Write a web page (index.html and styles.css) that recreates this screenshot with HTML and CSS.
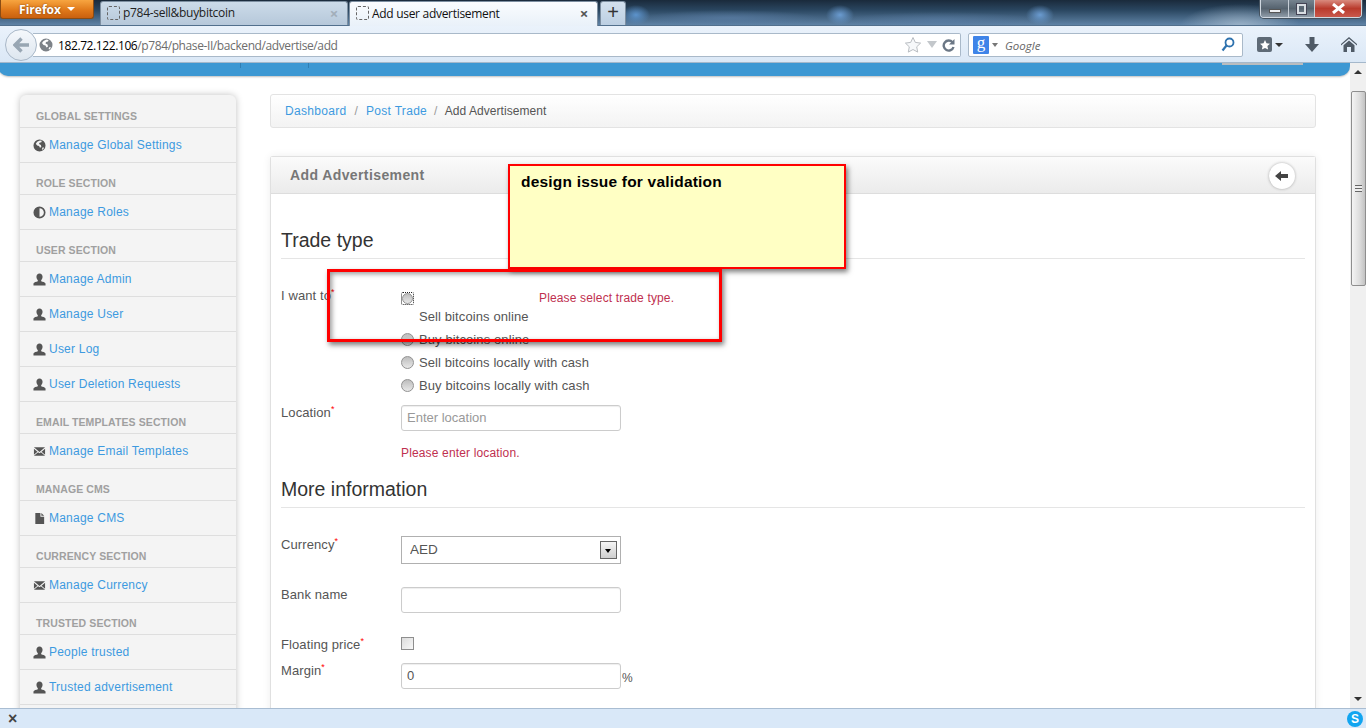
FILE: index.html
```html
<!DOCTYPE html>
<html>
<head>
    <title>Add user advertisement</title>
    <link rel="stylesheet" href="styles.css">
</head>
<body>
    <svg class="defs" width="0" height="0">
        <symbol id="i-user" viewBox="0 0 14 14"><path d="M7 0.5c2 0 3.3 1.5 3.3 3.6 0 1.600-.7 3-1.500 3.700v1.200c1.600.5 4.200 1.200 4.700 2.200v2.300H.5v-2.300c.5-1 3.100-1.700 4.700-2.200V7.800C4.400 7.100 3.700 5.700 3.700 4.100 3.700 2 5 .5 7 .5z"/></symbol>
        <symbol id="i-mail" viewBox="0 0 14 14"><path d="M1 2.500h12L7 7.500zM1 4l3.800 3.200L1 10.500zM13 4v6.500L9.200 7.200zM5.500 7.800L7 9l1.500-1.200 4.500 3.700H1z"/></symbol>
        <symbol id="i-file" viewBox="0 0 14 14"><path d="M2.500 1h5.500v4h4v8h-9.500zM9 1l3 3H9z"/></symbol>
        <symbol id="i-globe" viewBox="0 0 14 14"><path fill-rule="evenodd" d="M7 .5a6.500 6.500 0 1 1 0 13 6.500 6.500 0 0 1 0-13zM4.500 3L3 5l1.500 2 2 .5 1 2 1.500-1-.5-2-2-1 .5-1.500 2-.5.5-1.500-2-.5zM10.500 9l-1 2 1 .5 1.500-2z"/></symbol>
        <symbol id="i-contrast" viewBox="0 0 14 14"><path fill-rule="evenodd" d="M7 .5a6.500 6.500 0 1 1 0 13 6.500 6.500 0 0 1 0-13zM7 2.300v9.400a4.700 4.700 0 0 0 0-9.400z"/></symbol>
    </svg>

    <div class="window">
        <div class="titlebar">
            <div class="firefox-btn">Firefox <span class="caret"></span></div>
            <div class="tab">
                <span class="tab-fav"></span>
                <span class="tab-title">p784-sell&amp;buybitcoin</span>
                <span class="tab-close muted">&#215;</span>
            </div>
            <div class="tab tab-active">
                <span class="tab-fav"></span>
                <span class="tab-title">Add user advertisement</span>
                <span class="tab-close">&#215;</span>
            </div>
            <div class="tab-new">+</div>
            <div class="win-controls">
                <span class="win-btn win-min"><i></i></span>
                <span class="win-btn win-max"><i></i></span>
                <span class="win-btn win-close">
                    <svg width="13" height="11" viewBox="0 0 13 11"><path d="M1 1l11 9M12 1L1 10" stroke="#fff" stroke-width="3"/></svg>
                </span>
            </div>
        </div>

        <div class="navbar">
            <div class="back-btn">
                <svg width="17" height="16" viewBox="0 0 17 16"><path d="M8.500 1.500L2 8l6.500 6.500M2.500 8H16" fill="none" stroke="#98a6b3" stroke-width="3.400"/></svg>
            </div>
            <div class="urlbar">
                <svg class="url-globe" width="14" height="14"><use href="#i-globe" fill="#7d8288"/></svg>
                <span class="url-text"><b>182.72.122.106</b>/p784/phase-II/backend/advertise/add</span>
                <svg class="url-star" width="18" height="18" viewBox="0 0 18 18"><path d="M9 1.500l2.300 4.900 5.300.7-3.900 3.700 1 5.300L9 13.500l-4.700 2.600 1-5.300L1.400 7.100l5.300-.7z" fill="#f6f8fa" stroke="#b9bdc2"/></svg>
                <span class="url-drop"></span>
                <svg class="url-reload" width="13" height="14" viewBox="0 0 13 14"><path d="M10.500 4.300A5 5 0 1 0 11.500 9" fill="none" stroke="#6b7785" stroke-width="2.400"/><path d="M12.500 1v5.500H7z" fill="#6b7785"/></svg>
            </div>
            <div class="searchbar">
                <span class="g-badge">g</span>
                <span class="search-drop"></span>
                <span class="search-text">Google</span>
                <svg width="14" height="15" viewBox="0 0 14 15"><circle cx="8.500" cy="5.500" r="4" fill="none" stroke="#2e72ae" stroke-width="1.800"/><path d="M5.500 8.500L1.500 13.500" stroke="#2e72ae" stroke-width="2.200"/></svg>
            </div>
            <div class="nav-tools">
                <span class="bm-btn">
                    <svg width="14" height="14" viewBox="0 0 14 14"><path d="M7 2l1.500 3.300 3.500.4-2.600 2.400.7 3.500L7 9.900l-3.100 1.700.7-3.500L2 5.700l3.500-.4z" fill="#fff"/></svg>
                </span>
                <span class="bm-caret"></span>
                <svg class="dl-icon" width="14" height="15" viewBox="0 0 14 15"><path d="M4.500 0h5v7H14l-7 8-7-8h4.500z" fill="#4f5a66"/></svg>
                <svg class="home-icon" width="16" height="15" viewBox="0 0 16 15"><path d="M8 0l8 7v1.500L8 1.800 0 8.500V7z" fill="#4f5a66"/><path d="M8 3.500l5.500 4.700V15H10v-5H6v5H2.500V8.200z" fill="#4f5a66"/></svg>
            </div>
        </div>

        <div class="viewport">
            <div class="page">
                <div class="site-header"><i class="hdr-sep"></i><i class="hdr-sep"></i><i class="hdr-btn"></i></div>
                <div class="columns">
                    <aside class="sidebar">
                        <div class="side-head">Global Settings</div>
                        <a class="side-item"><svg width="13" height="13"><use href="#i-globe"/></svg>Manage Global Settings</a>
                        <div class="side-head">Role Section</div>
                        <a class="side-item"><svg width="13" height="13"><use href="#i-contrast"/></svg>Manage Roles</a>
                        <div class="side-head">User Section</div>
                        <a class="side-item"><svg width="13" height="13"><use href="#i-user"/></svg>Manage Admin</a>
                        <a class="side-item"><svg width="13" height="13"><use href="#i-user"/></svg>Manage User</a>
                        <a class="side-item"><svg width="13" height="13"><use href="#i-user"/></svg>User Log</a>
                        <a class="side-item"><svg width="13" height="13"><use href="#i-user"/></svg>User Deletion Requests</a>
                        <div class="side-head">Email Templates Section</div>
                        <a class="side-item"><svg width="13" height="13"><use href="#i-mail"/></svg>Manage Email Templates</a>
                        <div class="side-head">Manage CMS</div>
                        <a class="side-item"><svg width="13" height="13"><use href="#i-file"/></svg>Manage CMS</a>
                        <div class="side-head">Currency Section</div>
                        <a class="side-item"><svg width="13" height="13"><use href="#i-mail"/></svg>Manage Currency</a>
                        <div class="side-head">Trusted Section</div>
                        <a class="side-item"><svg width="13" height="13"><use href="#i-user"/></svg>People trusted</a>
                        <a class="side-item"><svg width="13" height="13"><use href="#i-user"/></svg>Trusted advertisement</a>
                        <div class="side-more"></div>
                    </aside>

                    <main class="main">
                        <div class="breadcrumb">
                            <a>Dashboard</a><span class="crumb-sep">/</span><a>Post Trade</a><span class="crumb-sep">/</span><span class="crumb-current">Add Advertisement</span>
                        </div>
                        <section class="panel">
                            <div class="panel-head">
                                <span class="panel-title">Add Advertisement</span>
                                <span class="round-btn">
                                    <svg width="14" height="10" viewBox="0 0 14 10"><path d="M6 0v3h7v4H6v3L0 5z" fill="#444"/></svg>
                                </span>
                            </div>
                            <div class="panel-body">
                                <h3 class="legend legend-first">Trade type</h3>
                                <div class="form-row row-trade">
                                    <label class="form-label">I want to<sup class="req">*</sup></label>
                                    <div class="radio-list">
                                        <div class="radio-first"><span class="focus-ring"><input type="radio" class="radio" name="trade"></span><span class="error error-trade">Please select trade type.</span></div>
                                        <div class="radio-text-only">Sell bitcoins online</div>
                                        <div class="radio-row"><input type="radio" class="radio" name="trade">Buy bitcoins online</div>
                                        <div class="radio-row"><input type="radio" class="radio" name="trade">Sell bitcoins locally with cash</div>
                                        <div class="radio-row"><input type="radio" class="radio" name="trade">Buy bitcoins locally with cash</div>
                                    </div>
                                </div>
                                <div class="form-row row-location">
                                    <label class="form-label">Location<sup class="req">*</sup></label>
                                    <div>
                                        <input type="text" class="text-input" placeholder="Enter location">
                                        <div class="error error-location">Please enter location.</div>
                                    </div>
                                </div>
                                <h3 class="legend legend-more">More information</h3>
                                <div class="form-row row-currency">
                                    <label class="form-label">Currency<sup class="req">*</sup></label>
                                    <div class="select-wrap">
                                        <select class="select-input"><option>AED</option></select>
                                        <span class="select-arrow"></span>
                                    </div>
                                </div>
                                <div class="form-row row-bank">
                                    <label class="form-label">Bank name</label>
                                    <input type="text" class="text-input">
                                </div>
                                <div class="form-row row-floating">
                                    <label class="form-label">Floating price<sup class="req">*</sup></label>
                                    <input type="checkbox" class="check">
                                </div>
                                <div class="form-row row-margin">
                                    <label class="form-label">Margin<sup class="req">*</sup></label>
                                    <input type="text" class="text-input" value="0"><span class="unit">%</span>
                                </div>
                            </div>
                        </section>
                    </main>
                </div>
            </div>
            <div class="scrollbar">
                <span class="sb-up"></span>
                <div class="sb-thumb"><i></i></div>
                <span class="sb-down"></span>
            </div>

            <div class="note">design issue for validation</div>
            <div class="redbox"></div>
        </div>

        <div class="statusbar">
            <span class="status-x">&#215;</span>
            <span class="skype">S</span>
        </div>
    </div>
</body>
</html>
```

FILE: styles.css
```css
* {
    box-sizing: border-box;
}

html, body {
    margin: 0;
    height: 100%;
    overflow: hidden;
}

body {
    font-family: "Liberation Sans", Arial, sans-serif;
    font-size: 12px;
    letter-spacing: 0.22px;
    color: #555;
}

.defs {
    position: absolute;
}

.window {
    display: flex;
    flex-direction: column;
    height: 728px;
}

/* browser chrome */
.titlebar {
    height: 26px;
    display: flex;
    align-items: flex-end;
    padding-left: 100px;
    position: relative;
    letter-spacing: 0;
    background:
        radial-gradient(ellipse 14px 10px at 840px 15px, #6a9bd0 0, rgba(106,155,208,0) 100%),
        radial-gradient(ellipse 14px 10px at 1040px 15px, #6a9bd0 0, rgba(106,155,208,0) 100%),
        radial-gradient(ellipse 14px 10px at 636px 15px, #5c93cc 0, rgba(92,147,204,0) 100%),
        radial-gradient(ellipse 90px 8px at 730px 18px, rgba(90,125,165,.7) 0, rgba(90,125,165,0) 100%),
        radial-gradient(ellipse 100px 8px at 940px 20px, rgba(90,125,165,.6) 0, rgba(90,125,165,0) 100%),
        radial-gradient(ellipse 60px 22px at 1240px 26px, rgba(170,190,208,.8) 0, rgba(170,190,208,0) 100%),
        linear-gradient(#1a2a3b 0, #2a4660 40%, #5f83a6 100%);
    border-bottom: 1px solid #52708d;
}

.firefox-btn {
    position: absolute;
    left: 0;
    top: 0;
    width: 94px;
    height: 19px;
    background: linear-gradient(#f7a540, #e0791a 55%, #c9600f);
    border: 1px solid #8a4c14;
    border-top: 0;
    border-radius: 0 0 3px 3px;
    color: #fff;
    font-size: 12px;
    font-weight: bold;
    font-family: "Open Sans", sans-serif;
    display: flex;
    align-items: center;
    justify-content: center;
    gap: 6px;
    text-shadow: 0 0 2px #7a3c08;
}

.caret {
    border: 4px solid transparent;
    border-top: 4px solid #fff;
    margin-top: 4px;
}

.tab {
    width: 248px;
    height: 24px;
    background: linear-gradient(#ccdbe9, #b6c8da);
    border: 1px solid #7d8fa1;
    border-bottom: 0;
    border-radius: 3px 3px 0 0;
    display: flex;
    align-items: center;
    padding: 0 9px 2px 6px;
    color: #222;
    font-family: "Open Sans", sans-serif;
    font-size: 12px;
    letter-spacing: -0.3px;
}

.tab-active {
    width: 249px;
    height: 25px;
    margin-bottom: -1px;
    background: linear-gradient(#fafcfe, #e9f1f9);
    margin-left: 1px;
    color: #111;
}

.tab-fav {
    width: 13px;
    height: 14px;
    border: 1px dashed #666;
    border-radius: 2px;
    margin-right: 3px;
    flex-shrink: 0;
}

.tab-title {
    flex: 1;
}

.tab-close {
    font-size: 15px;
    font-weight: bold;
    color: #555;
}

.tab-close.muted {
    color: #a2aeba;
}

.tab-new {
    width: 26px;
    height: 24px;
    margin-left: 2px;
    background: linear-gradient(#d2e0ee, #bccfe2);
    border: 1px solid #7d8fa1;
    border-bottom: 0;
    border-radius: 3px 3px 0 0;
    color: #333;
    font-size: 20px;
    line-height: 20px;
    text-align: center;
}

.win-controls {
    position: absolute;
    left: 1260px;
    top: 0;
    width: 102px;
    height: 18px;
    display: flex;
    border: 1px solid #d0d8e0;
    border-top: 0;
    border-radius: 0 0 4px 4px;
    box-shadow: 0 0 0 1px #44525f;
    overflow: hidden;
}

.win-btn {
    display: flex;
    align-items: center;
    justify-content: center;
    background: linear-gradient(#76838f, #56636f 50%, #8f9ca8);
    border-right: 1px solid #c6ced6;
}

.win-min { width: 28px; }
.win-max { width: 26px; }

.win-min i {
    width: 12px;
    height: 4px;
    background: #eef1f4;
    border: 1px solid #555;
    margin-top: 5px;
}

.win-max i {
    width: 9px;
    height: 10px;
    border: 2px solid #d8dde2;
    outline: 1px solid #445;
    box-shadow: 2px -2px 0 -1px #b8c0c8;
}

.win-close {
    flex: 1;
    border: 0;
    background: linear-gradient(#d98a7e, #b93a2c 50%, #c9594c);
}

.navbar {
    height: 37px;
    background: linear-gradient(#eaf2fb, #dbe8f6);
    border-bottom: 1px solid #a5b8cb;
    display: flex;
    align-items: center;
    padding: 1px 0 0 33px;
    position: relative;
    letter-spacing: 0;
}

.back-btn {
    position: absolute;
    left: 5px;
    top: 3px;
    width: 32px;
    height: 32px;
    border-radius: 50%;
    background: linear-gradient(#f5f8fc, #dde6ef);
    border: 1px solid #a9b8c8;
    display: flex;
    align-items: center;
    justify-content: center;
    z-index: 1;
}

.urlbar {
    width: 928px;
    height: 24px;
    background: #fff;
    border: 1px solid #a9b9c9;
    border-left: 0;
    border-radius: 0 2px 2px 0;
    display: flex;
    align-items: center;
    padding: 0 5px 0 6px;
    font-family: "Open Sans", sans-serif;
    font-size: 12px;
    letter-spacing: -0.4px;
    color: #6d6d6d;
}

.url-text {
    flex: 1;
    margin-left: 5px;
    padding-top: 1px;
}

.url-text b {
    font-weight: normal;
    color: #000;
}

.url-drop {
    border: 5px solid transparent;
    border-top: 7px solid #c3c7cb;
    margin: 5px 5px 0 5px;
}

.searchbar {
    width: 275px;
    height: 24px;
    margin-left: 7px;
    background: #fff;
    border: 1px solid #a9b9c9;
    border-radius: 2px;
    display: flex;
    align-items: center;
    padding: 0 7px 0 4px;
}

.g-badge {
    width: 16px;
    height: 18px;
    background: #3f84e8;
    color: #fff;
    font-family: "Liberation Serif", serif;
    font-size: 17px;
    line-height: 14px;
    text-align: center;
    border-radius: 1px;
}

.search-drop {
    border: 3px solid transparent;
    border-top: 4px solid #777;
    margin: 4px 0 0 3px;
}

.search-text {
    flex: 1;
    margin-left: 7px;
    padding-top: 1px;
    font-family: "Open Sans", sans-serif;
    font-style: italic;
    font-size: 11.500px;
    color: #666;
}

.nav-tools {
    display: flex;
    align-items: center;
    margin-left: 14px;
}

.bm-btn {
    width: 15px;
    height: 15px;
    background: #5e6a76;
    border-radius: 2px;
    display: flex;
    align-items: center;
    justify-content: center;
}

.bm-caret {
    border: 4px solid transparent;
    border-top: 4px solid #333;
    margin: 4px 0 0 3px;
}

.dl-icon { margin-left: 22px; }
.home-icon { margin-left: 22px; }

/* page */
.viewport {
    flex: 1;
    display: flex;
    min-height: 0;
    position: relative;
}

.page {
    flex: 1;
    overflow: hidden;
    background: #fff;
}

.site-header {
    height: 13px;
    background: #3d98d3;
    border-radius: 0 0 10px 10px;
    box-shadow: 0 1px 2px rgba(0,0,0,.25);
    display: flex;
    padding-left: 242px;
    margin-left: -2px;
}

.hdr-sep {
    width: 1px;
    height: 5px;
    background: #2f7eb4;
    margin-right: 67px;
}

.hdr-btn {
    position: absolute;
    left: 1222px;
    top: 0;
    width: 81px;
    height: 2px;
    background: #b9bcbf;
}

.columns {
    display: flex;
    align-items: flex-start;
    padding: 18px 34px 0 20px;
}

.sidebar {
    width: 216px;
    flex-shrink: 0;
    background: #f4f4f4;
    border-radius: 6px 6px 0 0;
    box-shadow: 0 0 7px rgba(0,0,0,.25);
    margin-top: 1px;
    padding-top: 1px;
}

.side-head {
    height: 32px;
    padding: 14px 0 0 16px;
    font-size: 10.500px;
    line-height: 13px;
    font-weight: bold;
    text-transform: uppercase;
    color: #a0a0a0;
    border-bottom: 1px solid #dedede;
    letter-spacing: 0.1px;
}

.side-item {
    height: 35px;
    display: flex;
    align-items: center;
    gap: 3px;
    padding-left: 13px;
    color: #3d9ae0;
    border-bottom: 1px solid #dedede;
}

.side-item svg {
    fill: #555;
    flex-shrink: 0;
}

.side-more {
    height: 40px;
}

.main {
    flex: 1;
    margin-left: 34px;
    min-width: 0;
}

.breadcrumb {
    height: 34px;
    border: 1px solid #e3e3e3;
    border-radius: 3px;
    background: linear-gradient(#fff, #f3f3f3);
    padding: 0 14px;
    display: flex;
    align-items: center;
    color: #555;
    letter-spacing: 0.3px;
}

.breadcrumb a {
    color: #3d9ae0;
}

.crumb-sep {
    margin: 0 7px;
    color: #999;
}

.crumb-sep:first-of-type {
    margin: 0 8px;
}

.crumb-current {
    letter-spacing: 0.05px;
}

.panel {
    margin-top: 28px;
    border: 1px solid #e0e0e0;
    border-bottom: 0;
    border-radius: 3px 3px 0 0;
    box-shadow: 0 0 8px rgba(0,0,0,.07);
    background: #fff;
}

.panel-head {
    height: 37px;
    background: linear-gradient(#fbfbfb, #ebebeb);
    border-bottom: 1px solid #ddd;
    display: flex;
    align-items: center;
    justify-content: space-between;
    padding: 0 20px 0 19px;
}

.panel-title {
    font-size: 14px;
    font-weight: bold;
    color: #777;
    letter-spacing: 0.4px;
}

.round-btn {
    width: 26px;
    height: 26px;
    border-radius: 50%;
    background: #fff;
    box-shadow: 0 0 3px rgba(0,0,0,.3);
    display: flex;
    align-items: center;
    justify-content: center;
    margin-top: 1px;
}

.panel-body {
    padding: 0 10px 60px 10px;
    font-size: 13px;
    letter-spacing: 0.1px;
}

.legend {
    margin: 0;
    font-size: 19.500px;
    font-weight: normal;
    line-height: 24px;
    color: #333;
    letter-spacing: 0;
    padding-bottom: 6px;
    border-bottom: 1px solid #e5e5e5;
}

.legend-first { margin-top: 34px; }
.legend-more { margin-top: 17px; }

.form-row {
    display: flex;
    align-items: flex-start;
}

.form-label {
    width: 120px;
    flex-shrink: 0;
    line-height: 14px;
}

.req {
    color: #f00;
    font-size: 9px;
    line-height: 0;
}

.row-trade { margin-top: 30px; }
.row-location { margin-top: 8px; }
.row-currency { margin-top: 30px; }
.row-bank { margin-top: 23px; }
.row-floating { margin-top: 24px; }
.row-margin { margin-top: 11px; }

.row-location .form-label,
.row-bank .form-label,
.row-floating .form-label,
.row-margin .form-label {
    padding-top: 1px;
}

.radio-list {
    line-height: 23px;
    margin-top: -1px;
}

.radio-first {
    display: flex;
    align-items: center;
    height: 17px;
    padding-top: 3px;
}

.radio-text-only {
    padding-left: 18px;
}

.radio-row {
    display: flex;
    align-items: center;
}

.radio {
    appearance: none;
    width: 13px;
    height: 13px;
    margin: 0 5px 0 0;
    border-radius: 50%;
    border: 1px solid #929292;
    background: linear-gradient(#bdbdbd, #e8e8e8);
    flex-shrink: 0;
}

.focus-ring {
    display: flex;
    align-items: center;
    justify-content: center;
    width: 13px;
    height: 13px;
    border: 1px dotted #222;
    border-radius: 2px;
    margin-right: 5px;
}

.focus-ring .radio {
    width: 11px;
    height: 11px;
    margin: 0;
}

.error {
    color: #c0304f;
    font-size: 12px;
    letter-spacing: 0.15px;
}

.error-trade {
    margin-left: 120px;
    margin-top: 1px;
}

.error-location {
    margin-top: 15px;
}

.text-input {
    display: block;
    width: 220px;
    height: 26px;
    padding: 0 5px 1px;
    border: 1px solid #ccc;
    border-radius: 3px;
    box-shadow: inset 0 1px 1px rgba(0,0,0,.07);
    font-family: inherit;
    font-size: 13px;
    letter-spacing: 0;
    color: #555;
    background: #fff;
}

.text-input::placeholder {
    color: #999;
}

.select-wrap {
    position: relative;
    width: 220px;
    margin-top: -2px;
}

.select-input {
    appearance: none;
    display: block;
    width: 220px;
    height: 28px;
    padding: 0 8px 1px;
    border: 1px solid #b0b0b0;
    border-radius: 0;
    background: #fff;
    font-family: inherit;
    font-size: 13.500px;
    color: #555;
}

.select-arrow {
    position: absolute;
    right: 4px;
    top: 5px;
    width: 17px;
    height: 18px;
    border: 1px solid #666;
    background: linear-gradient(#f5f5f5, #cfcfcf);
}

.select-arrow::after {
    content: "";
    position: absolute;
    left: 4px;
    top: 7px;
    border: 3px solid transparent;
    border-top: 4px solid #000;
}

.check {
    appearance: none;
    width: 13px;
    height: 13px;
    margin: 0;
    border: 1px solid #8e8e8e;
    background: linear-gradient(135deg, #dcdcdc, #f8f8f8);
}

.unit {
    align-self: center;
    margin: 3px 0 0 1px;
    font-size: 12px;
}

/* scrollbar */
.scrollbar {
    width: 16px;
    flex-shrink: 0;
    background: #f0f0f0;
    position: relative;
    display: flex;
    flex-direction: column;
    align-items: center;
}

.sb-up {
    border: 4px solid transparent;
    border-bottom: 4px solid #333;
    margin-top: 3px;
    height: 0;
}

.sb-thumb {
    width: 15px;
    height: 195px;
    margin-top: 17px;
    border: 1px solid #8e8e8e;
    border-radius: 2px;
    background: linear-gradient(90deg, #f4f4f4, #dcdcdc 60%, #c2c2c2);
    display: flex;
    align-items: center;
    justify-content: center;
}

.sb-thumb i {
    width: 7px;
    height: 7px;
    background: repeating-linear-gradient(#666 0 1px, #eee 1px 3px);
}

.sb-down {
    border: 4px solid transparent;
    border-top: 4px solid #333;
    margin-top: auto;
    margin-bottom: 3px;
    height: 0;
}

/* annotations drawn over the screenshot */
.note {
    position: absolute;
    left: 508px;
    top: 101px;
    width: 338px;
    height: 105px;
    background: #ffffc4;
    border: 2px solid #f00;
    box-shadow: 2px 3px 5px rgba(0,0,0,.5);
    padding: 7px 11px;
    font-size: 15.500px;
    font-weight: bold;
    color: #000;
    letter-spacing: 0.2px;
}

.redbox {
    position: absolute;
    left: 327px;
    top: 206px;
    width: 395px;
    height: 73px;
    border: 3px solid #f00;
    box-shadow: 2px 3px 5px rgba(0,0,0,.5), inset 2px 2px 5px rgba(0,0,0,.4);
}

.statusbar {
    height: 20px;
    background: #d9e8f8;
    border-top: 1px solid #a9bdd2;
    display: flex;
    align-items: center;
    justify-content: space-between;
    padding: 0 3px 0 8px;
    position: relative;
    z-index: 1;
}

.status-x {
    font-size: 16px;
    line-height: 16px;
    font-weight: bold;
    color: #444;
}

.skype {
    width: 16px;
    height: 16px;
    border-radius: 50%;
    background: #12a5f0;
    color: #fff;
    font-weight: bold;
    font-size: 12px;
    line-height: 16px;
    text-align: center;
    letter-spacing: 0;
}
```
